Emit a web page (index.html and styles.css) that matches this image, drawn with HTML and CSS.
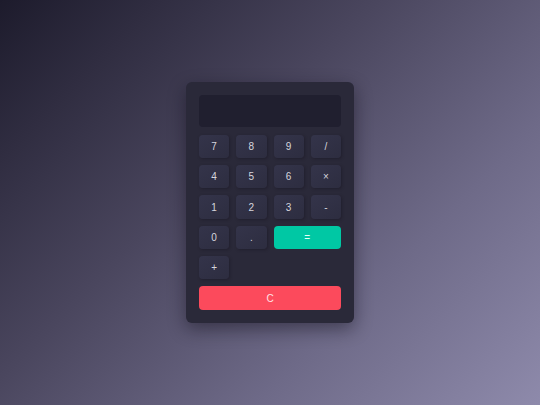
FILE: index.html
```html
<!DOCTYPE html>
<html>
<head>
<meta charset="utf-8">
<link rel="stylesheet" href="styles.css">
</head>
<body>
<div class="calc">
  <div class="display"></div>
  <div class="keys">
    <button class="key">7</button>
    <button class="key">8</button>
    <button class="key">9</button>
    <button class="key">/</button>
    <button class="key">4</button>
    <button class="key">5</button>
    <button class="key">6</button>
    <button class="key">×</button>
    <button class="key">1</button>
    <button class="key">2</button>
    <button class="key">3</button>
    <button class="key">-</button>
    <button class="key">0</button>
    <button class="key">.</button>
    <button class="key equals">=</button>
    <button class="key">+</button>
  </div>
  <button class="clear">C</button>
</div>
</body>
</html>
```
FILE: styles.css
```css
html, body {
  margin: 0;
  padding: 0;
  height: 100%;
}
body {
  background: linear-gradient(135deg, #1d1b2c 0%, #4a465e 40%, #6e6a88 70%, #8e8aab 100%);
  display: flex;
  align-items: center;
  justify-content: center;
  font-family: "Liberation Sans", Arial, sans-serif;
}
.calc {
  width: 142px;
  padding: 13.3px 13px 12.7px;
  background: #2a2939;
  border-radius: 6px;
  box-shadow: 0 6px 18px rgba(10, 8, 20, 0.45);
  display: flex;
  flex-direction: column;
}
.display {
  height: 32px;
  background: #201f2f;
  border-radius: 4px;
  margin-bottom: 7.4px;
}
.keys {
  display: grid;
  grid-template-columns: repeat(4, 1fr);
  grid-auto-rows: 23.33px;
  gap: 7px;
}
.key {
  border: none;
  margin: 0;
  padding: 0;
  border-radius: 4px;
  background: linear-gradient(145deg, #34344a 0%, #2d2d40 100%);
  box-shadow: 1px 1px 3px rgba(16, 15, 26, 0.35);
  color: #d6d6de;
  font-family: "Liberation Sans", Arial, sans-serif;
  font-size: 10px;
}
.equals {
  grid-column: span 2;
  background: #00c8a4;
  color: #e8fff8;
  box-shadow: none;
}
.clear {
  margin-top: 6.7px;
  height: 24px;
  border: none;
  padding: 0;
  border-radius: 4px;
  background: #fc4a5c;
  color: #ffe2e5;
  font-family: "Liberation Sans", Arial, sans-serif;
  font-size: 10px;
}
```
